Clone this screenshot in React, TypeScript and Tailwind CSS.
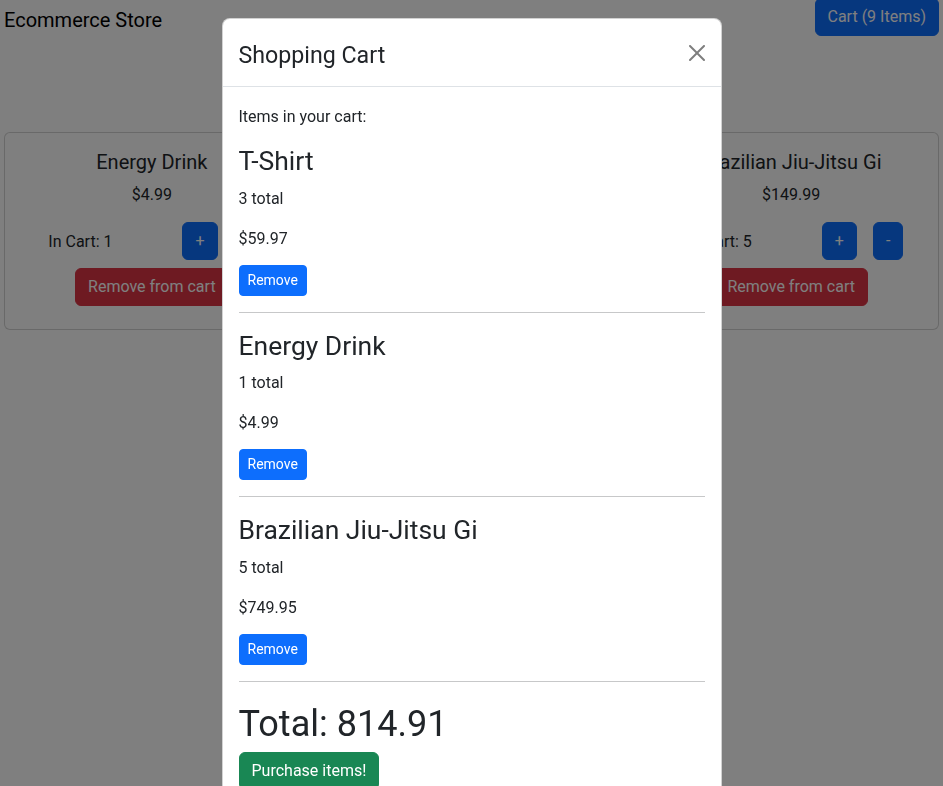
import React from "react";

type Product = { title: string; price: string; qty: number };

const products: Product[] = [
  { title: "Energy Drink", price: "$4.99", qty: 1 },
  { title: "T-Shirt", price: "$19.99", qty: 3 },
  { title: "Brazilian Jiu-Jitsu Gi", price: "$149.99", qty: 5 },
];

const cartItems = [
  { title: "T-Shirt", qty: 3, total: "$59.97" },
  { title: "Energy Drink", qty: 1, total: "$4.99" },
  { title: "Brazilian Jiu-Jitsu Gi", qty: 5, total: "$749.95" },
];

function ProductCard({ p }: { p: Product }) {
  return (
    <div className="rounded-[6px] border border-black/[0.175] bg-white">
      <div className="px-4 pt-[17px] pb-[15px] text-center">
        <div className="mb-2 text-[20px] leading-[1.2]">{p.title}</div>
        <p className="mb-4 pt-[1px] pb-0 text-base leading-6">{p.price}</p>
        <div className="-mx-3 -mt-[1px] grid grid-cols-2">
          <div className="px-3 pt-[8px] pb-[6px] text-base leading-6">In Cart: {p.qty}</div>
          <div className="px-3">
            <button className="mx-2 rounded-[6px] border border-[#0d6efd] bg-[#0d6efd] px-3 py-[6px] text-base leading-6 text-white">
              +
            </button>
            <button className="mx-2 rounded-[6px] border border-[#0d6efd] bg-[#0d6efd] px-3 py-[6px] text-base leading-6 text-white">
              -
            </button>
          </div>
        </div>
        <button className="my-2 rounded-[6px] border border-[#dc3545] bg-[#dc3545] px-3 py-[6px] text-base leading-6 text-white">
          Remove from cart
        </button>
      </div>
    </div>
  );
}

export default function App() {
  return (
    <div
      className="relative h-[786px] overflow-hidden bg-white text-[#212529]"
      style={{ fontFamily: "Roboto, 'Liberation Sans', sans-serif" }}
    >
      <nav className="-mt-[2px] flex h-[38px] items-center justify-between px-1">
        <span className="pt-[5px] text-[20px] leading-[30px] text-black">Ecommerce Store</span>
        <button className="rounded-[6px] border border-[#0d6efd] bg-[#0d6efd] px-3 py-[6px] text-base leading-6 text-white">
          Cart (9 Items)
        </button>
      </nav>
      <div className="mt-[96px] grid grid-cols-3 gap-6 px-1">
        {products.map((p) => (
          <ProductCard key={p.title} p={p} />
        ))}
      </div>

      <div className="fixed inset-0 bg-black/50" />

      <div className="fixed inset-0 overflow-hidden">
        <div className="mx-auto mt-[18px] w-[500px] rounded-lg border border-black/[0.175] bg-white">
          <div className="flex items-center justify-between border-b border-[#dee2e6] p-4">
            <div className="pt-[6px] text-[23.2px] leading-[28.8px]">Shopping Cart</div>
            <button className="-m-2 p-2 pt-[9px] pb-[7px] opacity-50">
              <svg width="16" height="16" viewBox="0 0 16 16" fill="#000">
                <path d="M.293.293a1 1 0 0 1 1.414 0L8 6.586 14.293.293a1 1 0 1 1 1.414 1.414L9.414 8l6.293 6.293a1 1 0 0 1-1.414 1.414L8 9.414l-6.293 6.293a1 1 0 0 1-1.414-1.414L6.586 8 .293 1.707a1 1 0 0 1 0-1.414z" />
              </svg>
            </button>
          </div>
          <div className="p-4">
            <p className="mb-[15px] pt-[2px] text-base leading-6">Items in your cart:</p>
            {cartItems.map((c) => (
              <div key={c.title}>
                <h3 className="mb-[10px] pt-[1px] text-[26.46px] leading-[1.2]">{c.title}</h3>
                <p className="mb-4 text-base leading-6">{c.qty} total</p>
                <p className="mb-[14px] text-base leading-6">{c.total}</p>
                <button className="rounded-[4px] border border-[#0d6efd] bg-[#0d6efd] px-2 py-1 text-sm leading-[1.5] text-white">
                  Remove
                </button>
                <hr className="my-4 border-0 border-t border-[#212529]/25" />
              </div>
            ))}
            <h1 className="mb-[6px] pt-[5px] text-[36.1px] leading-[1.2]">Total: 814.91</h1>
            <button className="rounded-[6px] border border-[#198754] bg-[#198754] px-3 py-[6px] text-base leading-6 text-white">
              Purchase items!
            </button>
          </div>
        </div>
      </div>
    </div>
  );
}
